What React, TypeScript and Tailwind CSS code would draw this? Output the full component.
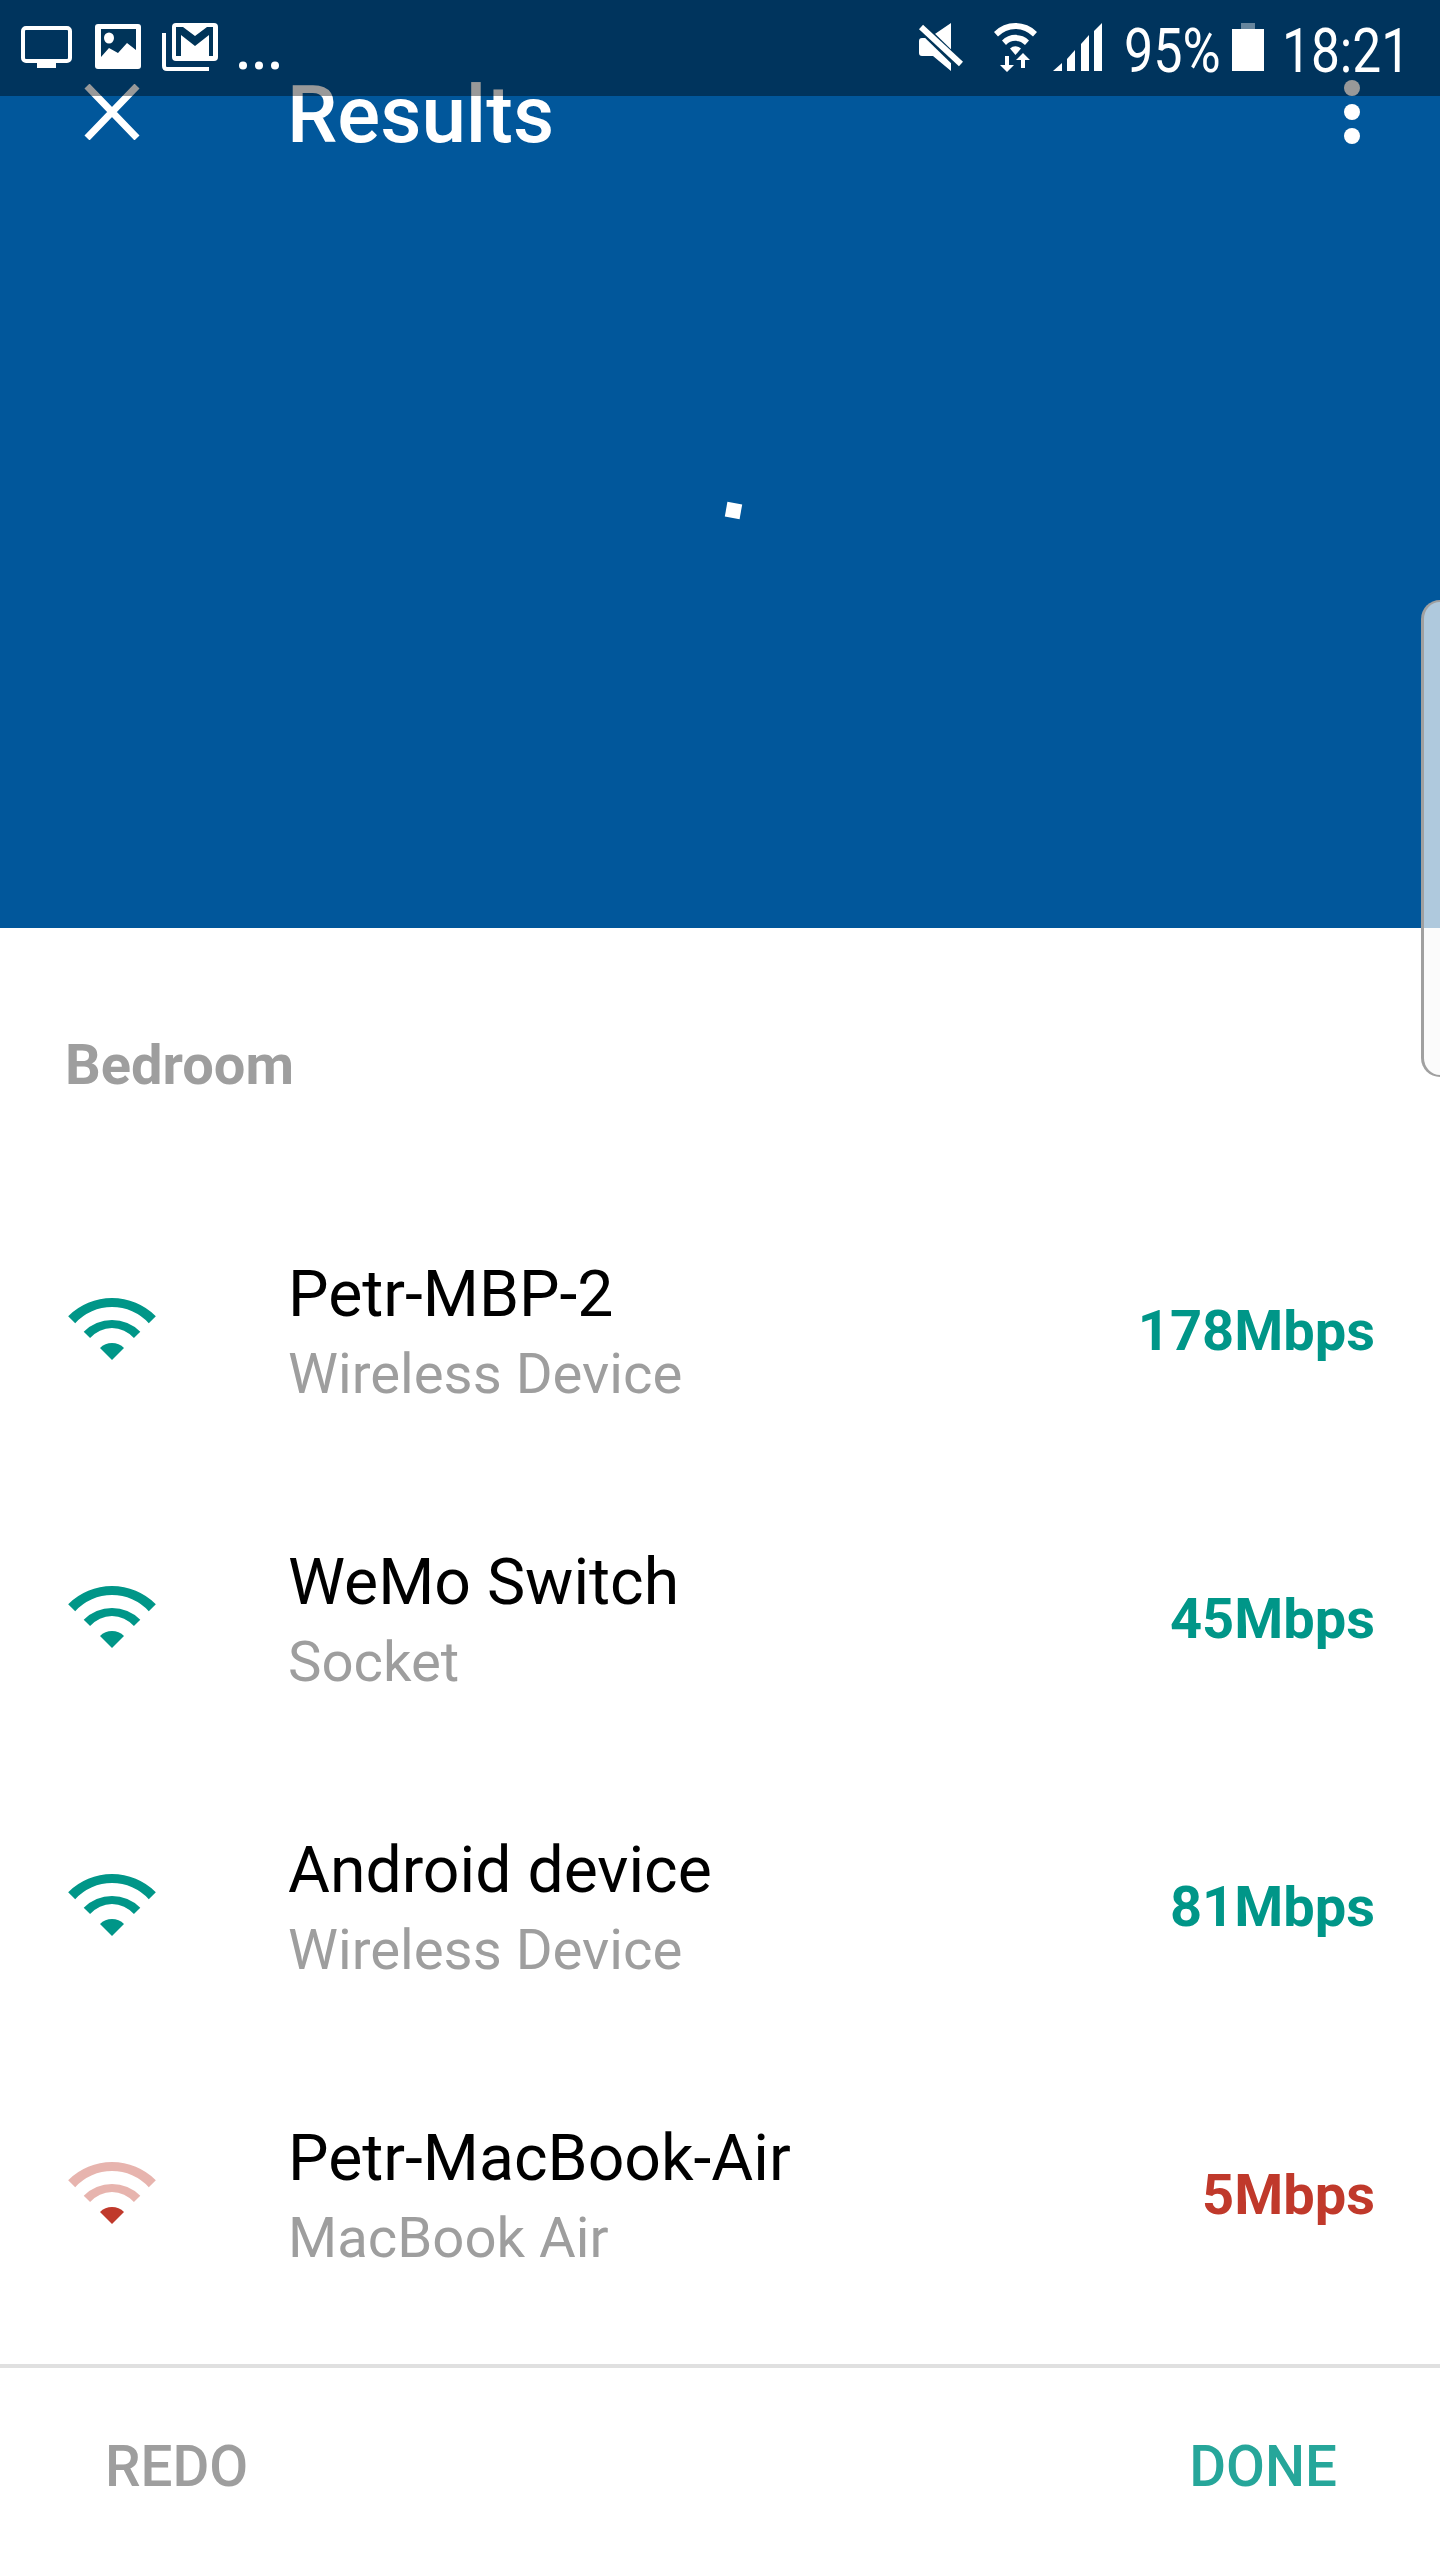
const devices = [
  { name: "Petr-MBP-2", kind: "Wireless Device", rate: "178Mbps", weak: false },
  { name: "WeMo Switch", kind: "Socket", rate: "45Mbps", weak: false },
  { name: "Android device", kind: "Wireless Device", rate: "81Mbps", weak: false },
  { name: "Petr-MacBook-Air", kind: "MacBook Air", rate: "5Mbps", weak: true },
];

const ink = "#003459";

const WifiStrength = ({ weak }: { weak: boolean }) => {
  const color = weak ? "#c0392b" : "#009688";
  const outer = weak ? 0.38 : 1;
  return (
    <svg width="88" height="62" viewBox="0 0 88 62" fill={color}>
      <path opacity={outer} d="M0.16 18.16A62 62 0 0 1 87.84 18.16L80.77 25.23A50 50 0 0 0 7.23 25.23Z" />
      <path opacity={outer} d="M15.72 33.72A40 40 0 0 1 72.28 33.72L65.92 40.08A29 29 0 0 0 22.08 40.08Z" />
      <path d="M31.98 49.98A17 17 0 0 1 56.02 49.98L44 62Z" />
    </svg>
  );
};

const StatusLeft = () => (
  <div className="flex items-start">
    <svg className="mt-[4px]" width="51" height="42" viewBox="0 0 51 42" fill="none">
      <rect x="2" y="2" width="47" height="33" rx="3" stroke="white" strokeWidth="4" />
      <rect x="16" y="36" width="19" height="6" fill="white" />
    </svg>
    <svg className="ml-[23px] mt-[2px]" width="46" height="45" viewBox="0 0 46 45">
      <rect width="46" height="45" rx="3" fill="white" />
      <path d="M6 5H41V26L32 19L23 29L14 24L6 33Z" fill={ink} />
      <ellipse cx="14" cy="14" rx="5" ry="5.5" fill="white" />
    </svg>
    <svg className="ml-[21px] mt-[1px]" width="56" height="48" viewBox="0 0 56 48">
      <path d="M2 10V43Q2 46 5 46H47" fill="none" stroke="white" strokeWidth="4" />
      <rect x="10" y="0" width="46" height="38" rx="4" fill="white" />
      <path d="M14 4H21L33 13L45 4H51V33H47V12L33 23L19 12V33H14Z" fill={ink} />
    </svg>
    <svg className="ml-[21px] mt-[39px]" width="41" height="9" viewBox="0 0 41 9" fill="white">
      <circle cx="4" cy="4.5" r="4" />
      <circle cx="20" cy="4.5" r="4" />
      <circle cx="36" cy="4.5" r="4" />
    </svg>
  </div>
);

const StatusRight = () => (
  <div className="flex items-start text-white">
    <svg className="mt-[1px]" width="44" height="48" viewBox="0 0 44 48">
      <path d="M3 15H10L32 0V48L14 33H3Q0 33 0 30V18Q0 15 3 15Z" fill="white" />
      <path d="M2 4L42 43" stroke={ink} strokeWidth="10" />
      <path d="M2 4L42 41" stroke="white" strokeWidth="6" />
    </svg>
    <svg className="ml-[31px]" width="43" height="50" viewBox="0 0 43 50" fill="white">
      <path d="M0 10A30 30 0 0 1 43 10L39 14.5A24 24 0 0 0 4 14.5Z" />
      <path d="M8 18.5A19 19 0 0 1 35 18.5L31 23A13 13 0 0 0 12 23Z" />
      <path d="M16 26.5A8 8 0 0 1 27 26.5L21.5 33Z" />
      <path d="M11 34H15V43H20L13 50L6 43H11Z" />
      <path d="M27 46H31V38H36L29 31L22 38H27Z" />
    </svg>
    <svg className="ml-[16px] mt-[1px]" width="49" height="48" viewBox="0 0 49 48" fill="white">
      <path d="M0 48L9 40V48Z" />
      <path d="M14 36L22 27V48H14Z" />
      <path d="M28 21L36 12V48H28Z" />
      <path d="M41 8L49 0V48H41Z" />
    </svg>
    <div className="ml-[22px] w-[94px] h-[48px]">
      <div className="origin-left scale-x-[0.84] text-[62px] leading-[62px] -mt-[2px] whitespace-nowrap font-normal">95%</div>
    </div>
    <svg className="ml-[14px] mt-[1px]" width="32" height="48" viewBox="0 0 32 48">
      <rect x="9" y="0" width="14" height="6" fill="white" opacity="0.4" />
      <rect x="0" y="6" width="32" height="42" fill="white" />
    </svg>
    <div className="ml-[18px] w-[122px] h-[48px]">
      <div className="origin-left scale-x-[0.83] text-[62px] leading-[62px] -mt-[2px] whitespace-nowrap font-normal">18:21</div>
    </div>
  </div>
);

export default function App() {
  return (
    <div className="relative w-[1440px] h-[2560px] overflow-hidden bg-white font-['Roboto',sans-serif] flex flex-col">
      <header className="h-[928px] bg-[#01579b] flex flex-col shrink-0">
        <div className="mt-[56px] h-[112px] flex items-center">
          <svg className="ml-[84px]" width="56" height="56" viewBox="0 0 56 56" stroke="white" strokeWidth="7" fill="none">
            <path d="M3 2L53 54M53 2L3 54" />
          </svg>
          <h1 className="ml-[147px] mt-[6px] text-[80px] leading-none font-medium text-white">Results</h1>
          <div className="ml-auto mr-[80px] flex flex-col gap-2">
            <span className="w-4 h-4 rounded-full bg-white" />
            <span className="w-4 h-4 rounded-full bg-white" />
            <span className="w-4 h-4 rounded-full bg-white" />
          </div>
        </div>
        <span className="ml-[726px] mt-[335px] w-[15px] h-[15px] rotate-[10deg] bg-white" />
      </header>

      <main className="flex-1 flex flex-col">
        <h2 className="pl-[65px] pt-[106px] pb-[91px] text-[56px] leading-[62px] font-bold text-[#9e9e9e]">Bedroom</h2>
        {devices.map((d) => (
          <div key={d.name} className="h-[288px] flex items-center">
            <div className="w-[288px] pl-[68px] shrink-0 -mt-[4px]">
              <WifiStrength weak={d.weak} />
            </div>
            <div className="flex-1 flex flex-col">
              <span className="text-[64.3px] leading-[76px] text-black">{d.name}</span>
              <span className="text-[56.3px] leading-[66px] text-[#9e9e9e] mt-[9px]">{d.kind}</span>
            </div>
            <span className={`pr-[65px] text-[56px] font-bold ${d.weak ? "text-[#c0392b]" : "text-[#009688]"}`}>{d.rate}</span>
          </div>
        ))}
      </main>

      <footer className="h-[196px] shrink-0 border-t-4 border-[#e0e0e0] flex items-center justify-between pl-[105px] pr-[103px] pt-[6px] text-[56.5px] font-medium">
        <span className="text-[#9e9e9e]">REDO</span>
        <span className="text-[#26a69a]">DONE</span>
      </footer>

      {/* status bar sits translucent over the toolbar */}
      <div className="absolute top-0 left-0 right-0 h-24 bg-black/40 flex justify-between pl-[21px] pr-[36px] pt-[22px]">
        <StatusLeft />
        <StatusRight />
      </div>

      {/* samsung edge panel handle */}
      <div className="absolute top-[600px] right-0 w-[19px] h-[477px] rounded-l-[20px] border-l-[3px] border-y-2 border-[#a0a0a0] bg-[#fafafa]/70" />
    </div>
  );
}
